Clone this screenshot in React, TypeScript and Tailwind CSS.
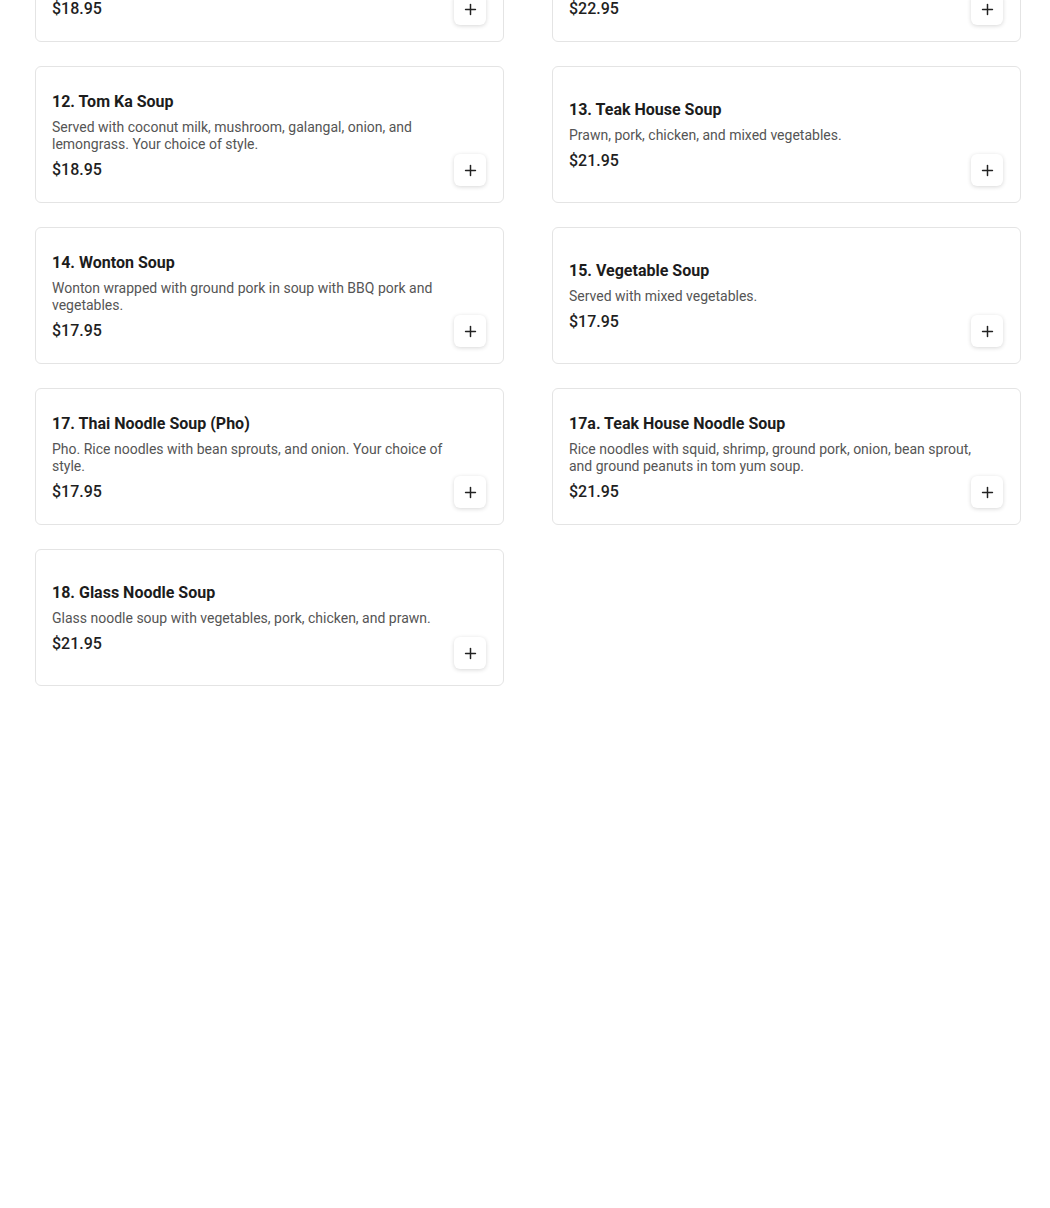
import { Plus } from 'lucide-react';

type Item = { name: string; desc: string; price: string };

const ITEMS: Item[] = [
  { name: '11. Tom Yum Soup', desc: 'Hot and sour soup with mushroom, tomato, lemongrass, galangal, and lime leaves. Your choice of style.', price: '$18.95' },
  { name: '11a. Seafood Tom Yum', desc: 'Prawn, squid, scallop, and mussel in hot and sour soup with mushroom and lemongrass.', price: '$22.95' },
  { name: '12. Tom Ka Soup', desc: 'Served with coconut milk, mushroom, galangal, onion, and lemongrass. Your choice of style.', price: '$18.95' },
  { name: '13. Teak House Soup', desc: 'Prawn, pork, chicken, and mixed vegetables.', price: '$21.95' },
  { name: '14. Wonton Soup', desc: 'Wonton wrapped with ground pork in soup with BBQ pork and vegetables.', price: '$17.95' },
  { name: '15. Vegetable Soup', desc: 'Served with mixed vegetables.', price: '$17.95' },
  { name: '17. Thai Noodle Soup (Pho)', desc: 'Pho. Rice noodles with bean sprouts, and onion. Your choice of style.', price: '$17.95' },
  { name: '17a. Teak House Noodle Soup', desc: 'Rice noodles with squid, shrimp, ground pork, onion, bean sprout, and ground peanuts in tom yum soup.', price: '$21.95' },
  { name: '18. Glass Noodle Soup', desc: 'Glass noodle soup with vegetables, pork, chicken, and prawn.', price: '$21.95' },
];

function MenuCard({ item }: { item: Item }) {
  return (
    <div className="flex h-[137px] rounded-md border border-[#e4e4e4] bg-white p-4">
      <div className="-mr-1 flex min-w-0 flex-1 flex-col justify-center pt-[2px]">
        <h3 className="text-base font-bold leading-6 text-[#1c1c1c]">{item.name}</h3>
        <p className="mt-[5px] text-sm leading-[17px] text-[#555555]">{item.desc}</p>
        <p className="mt-[5px] text-base font-medium leading-6 text-[#1f1f1f]">{item.price}</p>
      </div>
      <button type="button" aria-label={`Add ${item.name}`}
        className="mr-px inline-flex h-8 w-8 shrink-0 self-end items-center justify-center rounded-md bg-white text-[#222] shadow-[0_1px_4px_rgba(0,0,0,0.16)]">
        <Plus size={17} strokeWidth={2.1} />
      </button>
    </div>
  );
}

export default function App() {
  return (
    <div className="min-h-[1208px] overflow-hidden bg-white" style={{ fontFamily: 'Roboto, "Liberation Sans", sans-serif' }}>
      <div className="-mt-[95px] grid grid-cols-[469px_469px] gap-x-12 gap-y-6 pl-[35px]">
        {ITEMS.map(it => <MenuCard key={it.name} item={it} />)}
      </div>
    </div>
  );
}
